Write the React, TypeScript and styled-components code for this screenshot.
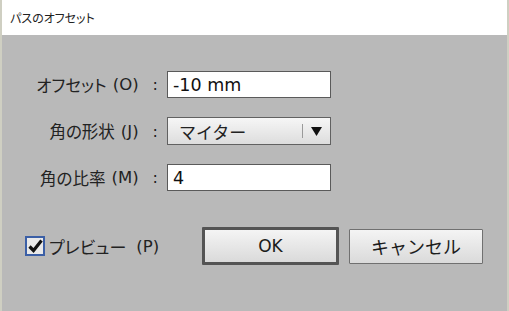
import styled, { createGlobalStyle } from "styled-components";

const GlobalStyle = createGlobalStyle`
  html, body {
    margin: 0;
    padding: 0;
    background: #b9b9b9;
  }
  body {
    font-family: "Noto Sans CJK JP", "Noto Sans", sans-serif;
    color: #222;
  }
`;

const Window = styled.div`
  width: 509px;
  height: 311px;
  box-sizing: border-box;
  background: #b9b9b9;
  border-left: 2px solid #cfcfc2;
  border-right: 2px solid #cfcfc2;
  display: flex;
  flex-direction: column;
`;

const TitleBar = styled.div`
  height: 35px;
  background: #ffffff;
  display: flex;
  align-items: center;
  padding-left: 8px;
  font-size: 12px;
  font-feature-settings: "palt";
  color: #222;
`;

const Body = styled.div`
  padding: 36px 0 0 0;
  display: flex;
  flex-direction: column;
`;

const Form = styled.div`
  display: grid;
  grid-template-columns: 156px 164px;
  column-gap: 9px;
  row-gap: 19px;
  align-items: center;
`;

const Label = styled.div`
  display: flex;
  justify-content: flex-end;
  align-items: center;
  font-size: 16.5px;
  font-feature-settings: "palt";
  white-space: nowrap;
`;

const Latin = styled.span`
  font-family: "DejaVu Sans", "Noto Sans CJK JP", sans-serif;
  font-size: 16.5px;
  margin-left: 6px;
`;

const Colon = styled.span`
  font-family: "DejaVu Sans", sans-serif;
  font-size: 16px;
  margin-left: 14px;
`;

const TextField = styled.div`
  height: 27px;
  box-sizing: border-box;
  background: #ffffff;
  border: 1px solid #5a5a5a;
  display: flex;
  align-items: center;
  padding-left: 5px;
  font-family: "DejaVu Sans", "Noto Sans CJK JP", sans-serif;
  font-size: 17.5px;
  color: #111;
`;

const Select = styled.div`
  height: 28px;
  box-sizing: border-box;
  border: 1px solid #616161;
  background: linear-gradient(#f6f6f6, #dddddd);
  display: flex;
  align-items: center;
  padding-left: 11px;
  font-size: 17px;
`;

const SelectText = styled.span`
  flex: 1;
`;

const Divider = styled.span`
  width: 1px;
  align-self: stretch;
  margin: 6px 0;
  background: #9a9a9a;
`;

const Arrow = styled.span`
  width: 27px;
  display: flex;
  justify-content: center;
  align-items: center;
`;

const Footer = styled.div`
  margin-top: 36px;
  display: flex;
  align-items: center;
  padding-left: 23px;
`;

const Preview = styled.label`
  display: flex;
  align-items: center;
  gap: 4px;
  width: 177px;
  font-size: 17px;
  font-feature-settings: "palt";
`;

const Box = styled.span`
  width: 20px;
  height: 20px;
  box-sizing: border-box;
  border: 2px solid #3b5fa6;
  background: #e9e9e9;
  display: flex;
  align-items: center;
  justify-content: center;
`;

const Button = styled.button<{ $default?: boolean }>`
  box-sizing: border-box;
  width: ${(p) => (p.$default ? "137px" : "134px")};
  height: ${(p) => (p.$default ? "38px" : "35px")};
  margin-right: ${(p) => (p.$default ? "10px" : "0")};
  border: ${(p) => (p.$default ? "3px solid #545454" : "1px solid #707070")};
  border-radius: 1px;
  background: linear-gradient(#f4f4f4, #dadada);
  font-family: "DejaVu Sans", "Noto Sans CJK JP", sans-serif;
  font-size: 17px;
  color: #1c1c1c;
  padding: 0;
`;

const CancelText = styled.span`
  font-family: "Noto Sans CJK JP", sans-serif;
  font-size: 18px;
`;

export default function App() {
  return (
    <>
      <GlobalStyle />
      <Window>
        <TitleBar>パスのオフセット</TitleBar>
        <Body>
          <Form>
            <Label>
              オフセット<Latin>(O)</Latin>
              <Colon>:</Colon>
            </Label>
            <TextField>-10 mm</TextField>

            <Label>
              角の形状<Latin>(J)</Latin>
              <Colon>:</Colon>
            </Label>
            <Select>
              <SelectText>マイター</SelectText>
              <Divider />
              <Arrow>
                <svg width="11" height="9" viewBox="0 0 11 9">
                  <path d="M0 0 H11 L5.5 9 Z" fill="#111" />
                </svg>
              </Arrow>
            </Select>

            <Label>
              角の比率<Latin>(M)</Latin>
              <Colon>:</Colon>
            </Label>
            <TextField>4</TextField>
          </Form>

          <Footer>
            <Preview>
              <Box>
                <svg width="15" height="15" viewBox="0 0 15 15">
                  <path d="M1.5 7.5 L5.5 11.5 L13.5 1.5" stroke="#111" strokeWidth="3.2" fill="none" />
                </svg>
              </Box>
              プレビュー<Latin>(P)</Latin>
            </Preview>
            <Button $default>OK</Button>
            <Button>
              <CancelText>キャンセル</CancelText>
            </Button>
          </Footer>
        </Body>
      </Window>
    </>
  );
}
